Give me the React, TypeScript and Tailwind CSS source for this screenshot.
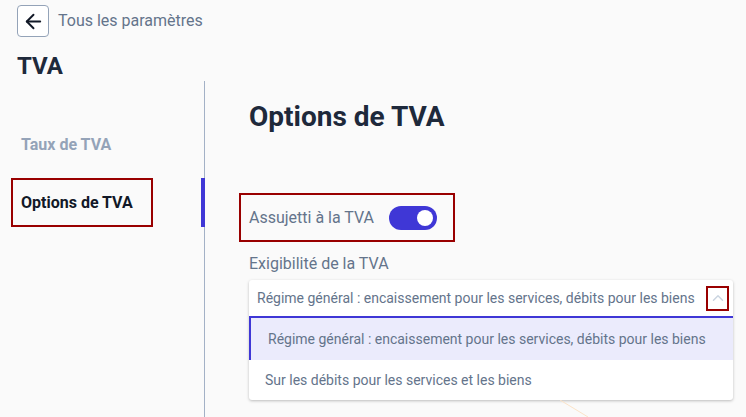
import { ArrowLeft, ChevronUp } from 'lucide-react';

const options = [
  'Régime général : encaissement pour les services, débits pour les biens',
  'Sur les débits pour les services et les biens',
];

export default function App() {
  return (
    <div className="h-[417px] w-[746px] overflow-hidden bg-[#fafafa] font-['Roboto',sans-serif] relative">
      <div className="flex items-center gap-[9px] pl-[17px] pt-[5px]">
        <button className="flex h-[32px] w-[32px] items-center justify-center rounded-[4px] border border-[#94a3b8] bg-white text-[#111827]">
          <ArrowLeft size={23} strokeWidth={2} />
        </button>
        <span className="text-[16px] text-[#64748b]">Tous les paramètres</span>
      </div>
      <h1 className="mt-[15px] pl-[17px] text-[24px] font-bold leading-[28px] text-[#1e293b]">TVA</h1>

      <div className="mt-[1px] flex">
        <nav className="w-[205px] shrink-0 border-r border-[#a3b1c6] pt-[40px] h-[336px]">
          <div className="flex h-[48px] items-center pl-[21px] text-[16px] font-bold text-[#94a3b8]">Taux de TVA</div>
          <div className="relative mt-[9px] flex h-[49px] items-center">
            <div className="ml-[11px] flex h-[49px] w-[142px] items-center border-2 border-[#990000] pl-[8px] text-[16px] font-bold text-[#111827]">
              Options de TVA
            </div>
            <div className="absolute right-[-1px] top-0 h-[49px] w-[4px] bg-[#3f37d6]" />
          </div>
        </nav>

        <main className="flex-1 pl-[44px] pt-[17px]">
          <h2 className="text-[28px] font-bold leading-[38px] text-[#1e293b]">Options de TVA</h2>

          <div className="mt-[57px] -ml-[10px] flex h-[49px] w-[216px] items-center gap-[15px] border-2 border-[#990000] pl-[8px]">
            <span className="text-[16px] text-[#64748b]">Assujetti à la TVA</span>
            <span className="relative h-[24px] w-[48px] rounded-full bg-[#3f37d6]">
              <span className="absolute right-[4px] top-[4px] h-[16px] w-[16px] rounded-full bg-white" />
            </span>
          </div>

          <div className="mt-[12px] text-[16px] leading-[20px] text-[#64748b]">Exigibilité de la TVA</div>

          <div className="mt-[6px] w-[484px] rounded-[3px] bg-white shadow-[0_1px_3px_rgba(0,0,0,0.25)]">
            <div className="flex h-[38px] items-center justify-between border-b-2 border-[#3f37d6] pl-[8px] pr-[4px]">
              <span className="text-[14px] text-[#64748b]">{options[0]}</span>
              <span className="flex h-[25px] w-[23px] items-center justify-center border-2 border-[#990000] text-[#cbd5e1]">
                <ChevronUp size={18} strokeWidth={2} />
              </span>
            </div>
            <div className="flex h-[42px] items-center border-l-2 border-[#3f37d6] bg-[#ebebfc] pl-[17px] text-[14px] text-[#64748b]">
              {options[0]}
            </div>
            <div className="flex h-[40px] items-center pl-[16px] text-[14px] text-[#64748b]">{options[1]}</div>
          </div>
        </main>
      </div>

      <svg className="absolute left-[540px] top-[400px]" width="80" height="17" viewBox="0 0 80 17">
        <path d="M20 0 L48 17" stroke="#fbe3c8" strokeWidth="1" fill="none" />
      </svg>
    </div>
  );
}
